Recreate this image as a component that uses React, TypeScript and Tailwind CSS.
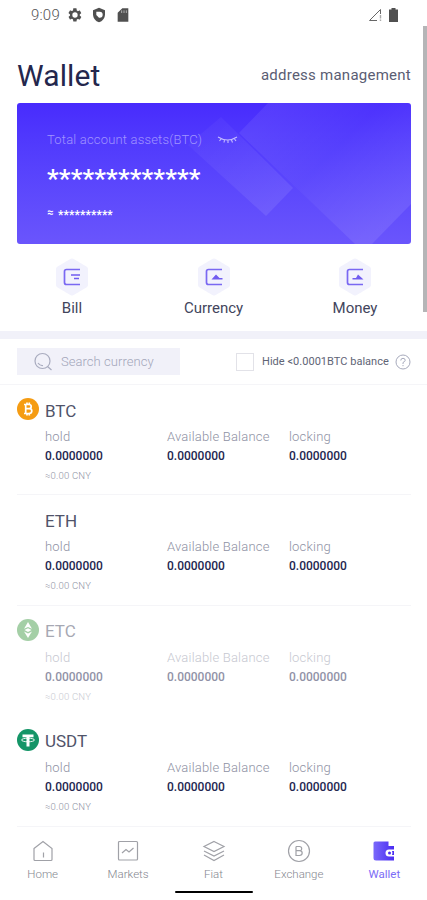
import React from "react";

function StatusBar() {
  return (
    <div className="flex h-[30px] items-center justify-between pl-[31px] pr-[29px] text-[#555]">
      <div className="flex items-center">
        <span className="w-[30px] text-[15px] leading-none font-light tracking-[0.2px] whitespace-nowrap text-[#555]">9:09</span>
        <svg className="ml-[6px]" width="16" height="16" viewBox="0 0 24 24" fill="#505050">
          <path fillRule="evenodd" d="M19.1 12.9a7 7 0 0 0 0-1.8l2.1-1.6c.2-.2.2-.4.1-.6l-2-3.500c-.1-.2-.4-.3-.6-.2l-2.400 1a7 7 0 0 0-1.600-1L14.300 2.500c0-.3-.3-.5-.5-.5h-3.900c-.3 0-.5.200-.5.400L9 5.100a7 7 0 0 0-1.600 1L5 5.100c-.2-.1-.5 0-.6.2l-2 3.500c-.1.2-.1.500.1.600l2.100 1.700a7 7 0 0 0 0 1.800l-2.100 1.600c-.2.200-.2.400-.1.600l2 3.500c.1.200.4.300.6.200l2.400-1a7 7 0 0 0 1.600 1l.4 2.600c0 .3.300.5.500.5h3.900c.3 0 .5-.2.500-.4l.4-2.600a7 7 0 0 0 1.600-1l2.400 1c.2.100.5 0 .6-.2l2-3.500c.1-.2.100-.5-.1-.6zM12 16a4 4 0 1 1 0-8 4 4 0 0 1 0 8z" />
        </svg>
        <svg className="ml-[8px]" width="16" height="16" viewBox="0 0 24 24">
          <path d="M12 1 3 5v6c0 5.500 3.800 10.700 9 12 5.200-1.300 9-6.500 9-12V5z" fill="#505050" />
          <path d="M8 7h5a4.500 4.500 0 0 1 0 9h-1l-4-4z" fill="#fff" />
        </svg>
        <svg className="ml-[8px]" width="16" height="16" viewBox="0 0 24 24">
          <path d="M20 2h-9L4 8.500V22h16z" fill="#505050" />
          <path d="M10 5v4M13.500 5v4M17 5v4" stroke="#bbb" strokeWidth="1.300" />
        </svg>
      </div>
      <div className="flex items-center gap-[6px]">
        <svg width="15" height="14" viewBox="0 0 15 14">
          <path d="M9 12.500H1.500L12.500 1.500V6" fill="none" stroke="#666" strokeWidth="1" />
          <path d="M12.500 7v3.500M12.500 11.500V13" stroke="#aaa" strokeWidth="1.400" />
        </svg>
        <svg width="9" height="14" viewBox="0 0 9 14">
          <path d="M2.500 0h4v1.500H9V14H0V1.500h2.500z" fill="#505050" />
        </svg>
      </div>
    </div>
  );
}

function BalanceCard() {
  return (
    <section className="relative mx-4 ml-[17px] h-[141px] overflow-hidden rounded-[3px] bg-gradient-to-b from-[#482bfd] to-[#6a55fc] text-white">
      <svg className="absolute inset-0" width="394" height="141" viewBox="0 0 394 141">
        <defs>
          <linearGradient id="small" x1="190" y1="20" x2="265" y2="110" gradientUnits="userSpaceOnUse">
            <stop offset="0" stopColor="#fff" stopOpacity="0.03" />
            <stop offset="1" stopColor="#fff" stopOpacity="0.09" />
          </linearGradient>
          <linearGradient id="large" x1="235" y1="30" x2="345" y2="141" gradientUnits="userSpaceOnUse">
            <stop offset="0" stopColor="#fff" stopOpacity="0.07" />
            <stop offset="0.450" stopColor="#fff" stopOpacity="0.025" />
            <stop offset="1" stopColor="#fff" stopOpacity="0.09" />
          </linearGradient>
        </defs>
        <path d="M204 14 276 85 249 113 171 42z" fill="url(#small)" />
        <path d="M251 0 222 30 338 141H355L394 101V0z" fill="url(#large)" />
      </svg>
      <div className="relative flex flex-col pl-[30px] pt-[28px]">
        <div className="flex h-[18px] items-center">
          <span className="w-[170px] text-[13px] leading-[18px] font-light tracking-[0.180px] whitespace-nowrap text-[#a094ff]">Total account assets(BTC)</span>
          <svg width="22" height="8" viewBox="0 0 22 8" fill="none" stroke="#c4bcff" strokeWidth="1.100">
            <path d="M1 1Q10.500 7 20 1M4 3 2.500 5M7.500 4 7 6.500M11 4.500V7M14.500 4 15.500 6.500M17.500 3 19 5" />
          </svg>
        </div>
        <div className="mt-[15px] h-[30px] text-[26px] leading-[30px] font-semibold tracking-[0.150px] whitespace-nowrap">*************</div>
        <div className="mt-[11px] flex h-[16px] items-center text-[12px] leading-[16px] font-semibold whitespace-nowrap">
          <span className="w-[11px] text-[11px]">≈</span>
          <span className="pt-1 tracking-[0.100px]">**********</span>
        </div>
      </div>
    </section>
  );
}

function Action({ label, children }: { label: string; children: React.ReactNode }) {
  return (
    <div className="flex w-[110px] flex-col items-center">
      <svg width="36" height="38" viewBox="0 0 36 38" fill="none">
        <path d="M18 3 31.500 11V27L18 35 4.500 27V11z" fill="#f2f2fd" stroke="#f2f2fd" strokeWidth="5" strokeLinejoin="round" />
        <path d="M26 11.500H12.500Q10.500 11.500 10.500 13.500V24.500Q10.500 26.500 12.500 26.500H26" stroke="#7a68f2" strokeWidth="1.700" />
        {children}
      </svg>
      <span className="mt-[2px] text-[15px] leading-[20px] text-[#42455c]">{label}</span>
    </div>
  );
}

function Actions() {
  return (
    <div className="flex h-[87px] justify-between px-[17px] pt-[14px]">
      <Action label="Bill">
        <path d="M17 17h9M20 20.500h5" stroke="#715cf0" strokeWidth="1.700" />
      </Action>
      <Action label="Currency">
        <path d="M15.500 21.500h11V20h-3L20 16.500z" fill="#715cf0" />
      </Action>
      <Action label="Money">
        <path d="M15.500 21.500h11L21 16.500 19 20H15.500z" fill="#715cf0" />
      </Action>
    </div>
  );
}

function SearchRow() {
  return (
    <div className="flex h-[46px] items-center border-b border-[#f5f5f8] pl-[17px]">
      <div className="flex h-[27px] w-[163px] items-center bg-[#f1f1f9] pl-[16px]">
        <svg width="20" height="20" viewBox="0 0 20 20" fill="none" stroke="#a9acbf" strokeWidth="1.200">
          <circle cx="9.500" cy="9" r="7.500" />
          <path d="M5 11q2 3 5 2.500M14.500 14.500 18.500 18" />
        </svg>
        <span className="ml-[8px] pt-px text-[13px] font-light tracking-[0.050px] whitespace-nowrap text-[#a3a6ba]">Search currency</span>
      </div>
      <span className="ml-[56px] size-[18px] border border-[#e2e2e8]" />
      <span className="ml-[8px] w-[128px] pt-[2px] text-[11px] tracking-[0.030px] whitespace-nowrap text-[#606475]">Hide &lt;0.0001BTC balance</span>
      <svg className="ml-[5px]" width="16" height="16" viewBox="0 0 16 16" fill="none" stroke="#a7aabc" strokeWidth="1">
        <circle cx="8" cy="8" r="7" />
        <path d="M5.800 6.500Q5.800 4.300 8 4.300T10.200 6.300Q10.200 7.500 8 8.500V10M8 11V12.200" />
      </svg>
    </div>
  );
}

function BtcIcon() {
  return (
    <svg width="22" height="22" viewBox="0 0 22 22" fill="none">
      <circle cx="11" cy="11" r="11" fill="#f59c13" />
      <path d="M8.500 6.500H12Q14.200 6.500 14.200 8.500T12 10.700H8.500M12 10.700Q14.800 10.700 14.800 13T12 15.500H7M8.700 6.500V15.500M10 4.500V6.500M12.300 4.500V6.500M10 15.500V17.500M12.300 15.500V17.500M7 6.500H9" stroke="#fff" strokeWidth="1.700" />
    </svg>
  );
}

function EtcIcon() {
  return (
    <svg width="22" height="22" viewBox="0 0 22 22">
      <circle cx="11" cy="11" r="11" fill="#4ba04f" />
      <path d="M11 3 15 9.700 11 8 7 9.700zM7.500 11 11 9.200 14.500 11 11 13zM7 12.500 11 14.500 15 12.500 11 19z" fill="#fff" />
    </svg>
  );
}

function UsdtIcon() {
  return (
    <svg width="22" height="22" viewBox="0 0 22 22" fill="none">
      <circle cx="11" cy="11" r="11" fill="#149567" />
      <path d="M5.500 5.500h11v2.800h-4V17.500h-3V8.300h-4z" fill="#fff" />
      <ellipse cx="11" cy="11" rx="6.500" ry="1.800" stroke="#fff" strokeWidth="0.900" />
    </svg>
  );
}

function Amount({ label }: { label: string }) {
  return (
    <div className="w-[122px]">
      <div className="text-[13px] leading-[18px] font-light tracking-[0.200px] whitespace-nowrap text-[#8e91a3]">{label}</div>
      <div className="mt-[1px] text-[12px] leading-[18px] font-medium text-[#23264f]">0.0000000</div>
    </div>
  );
}

function Coin({ name, icon, faded, line }: { name: string; icon?: React.ReactNode; faded?: boolean; line?: boolean }) {
  return (
    <article className="ml-[17px] mr-4 h-[110.600px] pt-[13px]">
      <div className={`flex h-full flex-col ${faded ? "opacity-50" : ""} ${line ? "border-b border-[#f5f5f8]" : ""}`}>
        <div className="flex h-[24px] items-center">
          <div className="h-[24px] w-[28px]">{icon}</div>
          <span className="pt-px text-[17px] leading-[24px] text-[#505369]">{name}</span>
        </div>
        <div className="ml-[28px] mt-[6px] flex">
          <Amount label="hold" />
          <Amount label="Available Balance" />
          <Amount label="locking" />
        </div>
        <div className="ml-[28px] mt-[5px] text-[9.500px] leading-[12px] font-light tracking-[0.200px] text-[#8e91a3]">≈0.00 CNY</div>
      </div>
    </article>
  );
}

function Tab({ label, active, children }: { label: string; active?: boolean; children: React.ReactNode }) {
  return (
    <div className="flex flex-1 flex-col items-center">
      <svg width="24" height="24" viewBox="0 0 24 24" fill="none" stroke="#a0a1a7" strokeWidth="1.200">
        {children}
      </svg>
      <span className={`mt-[4px] text-[11.500px] leading-[14px] ${active ? "text-[#7c6cf6]" : "font-light text-[#85878f]"}`}>{label}</span>
    </div>
  );
}

function NavBar() {
  return (
    <nav className="h-[74px]">
      <div className="ml-[17px] mr-4 h-px bg-[#f5f5f8]" />
      <div className="flex h-[64px] pt-[12px]">
        <Tab label="Home">
          <path d="M3 9.500 12 2.500 21 9.500V20.500Q21 21.500 20 21.500H4Q3 21.500 3 20.500zM12.500 18.500V13.500" />
        </Tab>
        <Tab label="Markets">
          <rect x="2.500" y="2.500" width="19" height="18.500" rx="1" />
          <path d="M6 14 10 10.500 13 13 17.500 9" />
        </Tab>
        <Tab label="Fiat">
          <path d="M12 2.500 22 7.500 12 12.500 2 7.500zM2 12 12 17 22 12M2 16 12 21.500 22 16" />
        </Tab>
        <Tab label="Exchange">
          <circle cx="12" cy="12" r="10.500" />
          <path d="M9 7.500H12.500Q14.700 7.500 14.700 9.600T12.500 11.700H9M12.500 11.700Q15.200 11.700 15.200 14T12.500 16.500H9V7.500" />
        </Tab>
        <Tab label="Wallet" active>
          <defs>
            <linearGradient id="walletFill" x1="0" y1="0" x2="1" y2="0">
              <stop offset="0" stopColor="#7a69fa" />
              <stop offset="1" stopColor="#4a2cf2" />
            </linearGradient>
          </defs>
          <path d="M3 2.500H16.500V7H22V21.500H4Q1.500 21.500 1.500 19V4Q1.500 2.500 3 2.500z" fill="url(#walletFill)" stroke="none" />
          <path d="M24 10.500H17Q13.500 10.500 13.500 14T17 17.500H24z" fill="#fff" stroke="none" />
          <circle cx="17.500" cy="14" r="1.500" fill="#4a2cf2" stroke="none" />
          <path d="M20 12H22V16H20Q21 14 20 12z" fill="#4a2cf2" stroke="none" />
        </Tab>
      </div>
      <div className="mx-auto h-[2px] w-[78px] rounded-full bg-black" />
    </nav>
  );
}

export default function App() {
  return (
    <main className="relative flex h-[900px] w-[427px] flex-col overflow-hidden bg-white font-['Roboto',sans-serif]">
      <StatusBar />
      <header className="flex h-[73px] items-center justify-between pl-[17px] pr-4 pt-[18px]">
        <h1 className="text-[30px] leading-[36px] tracking-[0.100px] text-[#24274d]">Wallet</h1>
        <span className="text-[15px] tracking-[0.250px] whitespace-nowrap text-[#5a5d73]">address management</span>
      </header>
      <BalanceCard />
      <Actions />
      <div className="h-[8px] shrink-0 bg-[#f1f1f9]" />
      <SearchRow />
      <div className="flex h-[441px] shrink-0 flex-col">
        <Coin name="BTC" icon={<BtcIcon />} line />
        <Coin name="ETH" line />
        <Coin name="ETC" icon={<EtcIcon />} faded />
        <Coin name="USDT" icon={<UsdtIcon />} />
      </div>
      <NavBar />
      <div className="absolute top-[26px] right-0 h-[286px] w-[4px] bg-[#b5b5b7]" />
    </main>
  );
}
